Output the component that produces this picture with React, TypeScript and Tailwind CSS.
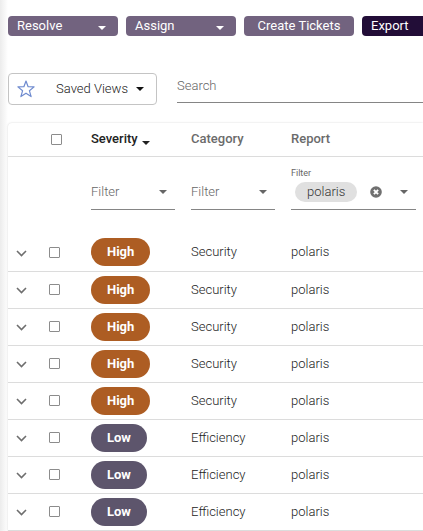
import React from "react";

type Severity = "High" | "Low";

interface Issue {
  id: number;
  severity: Severity;
  category: string;
  report: string;
}

const issues: Issue[] = [
  { id: 1, severity: "High", category: "Security", report: "polaris" },
  { id: 2, severity: "High", category: "Security", report: "polaris" },
  { id: 3, severity: "High", category: "Security", report: "polaris" },
  { id: 4, severity: "High", category: "Security", report: "polaris" },
  { id: 5, severity: "High", category: "Security", report: "polaris" },
  { id: 6, severity: "Low", category: "Efficiency", report: "polaris" },
  { id: 7, severity: "Low", category: "Efficiency", report: "polaris" },
  { id: 8, severity: "Low", category: "Efficiency", report: "polaris" },
];

const severityColor: Record<Severity, string> = {
  High: "bg-[#ad5d23]",
  Low: "bg-[#5d556c]",
};

function Caret({ className = "" }: { className?: string }) {
  return (
    <svg viewBox="0 0 8 4" className={`h-1 w-2 shrink-0 fill-current ${className}`} aria-hidden="true">
      <path d="M0 0h8L4 4z" />
    </svg>
  );
}

function Checkbox({ label }: { label: string }) {
  return (
    <input
      type="checkbox"
      aria-label={label}
      className="block size-[11px] appearance-none rounded-[1px] border border-[#8c8c8c] bg-white checked:bg-[#72637f]"
    />
  );
}

function MenuButton({ label }: { label: string }) {
  return (
    <button
      type="button"
      className="flex h-5 w-[110px] shrink-0 items-center justify-between rounded bg-[#72637f] pr-3 pl-[9px] text-white"
    >
      {label}
      <Caret className="mt-1" />
    </button>
  );
}

function FilterSelect({ label, options }: { label: string; options: string[] }) {
  return (
    <div className="relative flex h-[35px] w-[84px] items-center border-b border-[#858585] text-[#666666]">
      <select
        aria-label={label}
        defaultValue=""
        className="size-full appearance-none bg-transparent font-light outline-none"
      >
        <option value="">Filter</option>
        {options.map((option) => (
          <option key={option}>{option}</option>
        ))}
      </select>
      <Caret className="pointer-events-none absolute right-2" />
    </div>
  );
}

function ReportFilter() {
  return (
    <div className="text-[#666666]">
      <div className="text-[9px] leading-3">Filter</div>
      <div className="flex h-[31px] items-center border-b border-[#858585] pr-2 pb-1 pl-1">
        <span className="flex h-5 items-center rounded-full bg-[#e0e0e0] px-3 font-light text-[#333333]">polaris</span>
        <button type="button" aria-label="Clear report filter" className="ml-auto">
          <svg viewBox="0 0 12 12" className="size-3" aria-hidden="true">
            <circle cx="6" cy="6" r="5.8" fill="#707070" />
            <path d="M3.9 3.9l4.2 4.2M8.1 3.9L3.9 8.1" stroke="#fff" strokeWidth="1.9" />
          </svg>
        </button>
        <button type="button" aria-label="Open report filter" className="ml-[18px]">
          <Caret />
        </button>
      </div>
    </div>
  );
}

function IssueRow({ issue }: { issue: Issue }) {
  return (
    <tr className="h-[37px] border-b border-[#dcdcdc]">
      <td className="pl-2">
        <button type="button" aria-label={`Expand issue ${issue.id}`} className="block">
          <svg viewBox="0 0 11 7" className="mt-0.5 h-[7px] w-[11px]" fill="none" aria-hidden="true">
            <path d="M1 1l4.5 4.5L10 1" stroke="#6e6e6e" strokeWidth="1.6" />
          </svg>
        </button>
      </td>
      <td className="pl-1.5">
        <Checkbox label={`Select issue ${issue.id}`} />
      </td>
      <td>
        <span
          className={`inline-flex h-7 items-center rounded-full px-4 align-middle font-bold text-white ${severityColor[issue.severity]}`}
        >
          {issue.severity}
        </span>
      </td>
      <td className="font-light">{issue.category}</td>
      <td className="font-light">{issue.report}</td>
    </tr>
  );
}

export default function App() {
  return (
    <div className="overflow-hidden bg-[linear-gradient(to_right,#ececec,#ffffff_8px)] pt-4 pl-2 font-['Roboto','Liberation_Sans',sans-serif] text-[13px] leading-4 text-[#222222]">
      <div className="flex gap-2">
        <MenuButton label="Resolve" />
        <MenuButton label="Assign" />
        <button type="button" className="h-5 w-[110px] shrink-0 rounded bg-[#72637f] text-white">
          Create Tickets
        </button>
        <button type="button" className="h-5 w-[110px] shrink-0 rounded bg-[#220d37] pl-[9px] text-left text-white">
          Export
        </button>
      </div>

      <div className="mt-[37px] flex items-start gap-5">
        <button
          type="button"
          className="flex h-8 w-[149px] shrink-0 items-center rounded border border-[#c4c4c4] bg-white pr-3 pl-2"
        >
          <svg viewBox="0 0 18 18" className="size-[18px]" fill="none" aria-hidden="true">
            <path
              d="M9 1l2.1 5.7 6 .2-4.7 3.8 1.7 5.9L9 13.2l-5.1 3.4 1.7-5.9L.9 6.900l6-.2z"
              stroke="#6f8bcf"
              strokeWidth="1.2"
              strokeLinejoin="round"
            />
          </svg>
          <span className="mr-2 ml-auto font-light">Saved Views</span>
          <Caret className="text-[#111111]" />
        </button>
        <input
          type="text"
          aria-label="Search"
          placeholder="Search"
          className="h-[30px] min-w-0 flex-1 border-b border-[#858585] bg-transparent pb-1 font-light outline-none placeholder:text-[#666666]"
        />
      </div>

      <div className="mt-[18px] rounded-tl bg-white shadow-[0_0_2px_rgba(0,0,0,0.18)]">
        <table className="w-full table-fixed border-collapse text-left">
          <colgroup>
            <col className="w-[35px]" />
            <col className="w-12" />
            <col className="w-[100px]" />
            <col className="w-[100px]" />
            <col />
          </colgroup>
          <thead>
            <tr className="h-[33px] border-b border-[#dcdcdc] text-[#6b6b6b]">
              <th />
              <th className="pl-2">
                <Checkbox label="Select all issues" />
              </th>
              <th className="font-medium text-[#222222]" aria-sort="descending">
                <button type="button" className="flex items-center gap-1">
                  Severity
                  <Caret className="mt-2" />
                </button>
              </th>
              <th className="font-medium">Category</th>
              <th className="font-medium">Report</th>
            </tr>
          </thead>
          <tbody>
            <tr className="h-[78px] align-top">
              <td />
              <td />
              <td className="pt-[18px]">
                <FilterSelect label="Severity filter" options={["High", "Low"]} />
              </td>
              <td className="pt-[18px]">
                <FilterSelect label="Category filter" options={["Security", "Efficiency"]} />
              </td>
              <td className="pt-2.5 pr-[7px]">
                <ReportFilter />
              </td>
            </tr>
            {issues.map((issue) => (
              <IssueRow key={issue.id} issue={issue} />
            ))}
          </tbody>
        </table>
      </div>
    </div>
  );
}
